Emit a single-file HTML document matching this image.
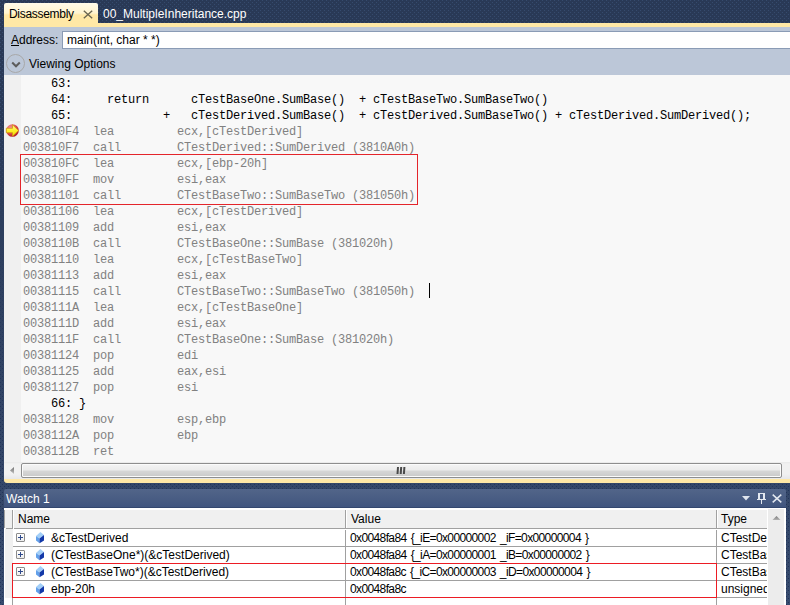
<!DOCTYPE html>
<html><head><meta charset="utf-8">
<style>
*{margin:0;padding:0;box-sizing:border-box}
html,body{width:790px;height:605px;overflow:hidden}
body{position:relative;background-color:#2b3b58;font-family:"Liberation Sans",sans-serif;font-size:12px;color:#000}
.abs{position:absolute}
#bgpat{left:0;top:0;width:790px;height:605px}
/* tabs */
#tab1{left:4px;top:3px;width:94px;height:24px;background:linear-gradient(#fffbe9 0,#fff4cf 10px,#ffe8a6 12px,#ffe8a6 100%);border-radius:2px 2px 0 0}
#tab1 .t{left:5px;top:4px;font-size:12px;color:#000;letter-spacing:-0.3px}
#stripe1{left:4px;top:23px;width:786px;height:4px;background:#ffe8a6}
#tab2t{left:103px;top:7px;color:#fff;font-size:12px}
/* disassembly panel */
#addrbar{left:4px;top:27px;width:786px;height:48px;background:#bcc7d8}
#addrlbl{left:11px;top:33px}
#addrbox{left:62px;top:31px;width:728px;height:18px;background:#fff;border:1px solid #8a9bb5;border-right:none}
#addrbox span{position:absolute;left:4px;top:1px}
#vocirc{left:6px;top:54px;width:19px;height:19px;border:1px solid #a8a8a8;border-radius:50%}
#volbl{left:29px;top:57px}
#margin{left:4px;top:75px;width:17px;height:387px;background:#f0f0f0}
#code{left:21px;top:75px;width:769px;height:387px;background:#f8f8f8}
#lines{left:23px;top:76px;font-family:"Liberation Mono",monospace;font-size:12px;letter-spacing:-0.2px;line-height:16px;white-space:pre;color:#818181}
#lines .s{color:#000}
#hscroll{left:4px;top:462px;width:786px;height:17px;background:linear-gradient(#e9e9e9 0,#f1f1f1 2px,#f1f1f1 12px,#e6e7ea 100%)}
#thumb{left:21px;top:463px;width:761px;height:15px;border:1px solid #8e8e8e;border-radius:2px;box-shadow:inset 0 0 0 1px #fbfbfb;background:linear-gradient(#f4f4f4 0,#ececec 45%,#d6d6d6 55%,#c9c9c9 100%)}
#stripe2{left:4px;top:479px;width:786px;height:4px;background:#ffe8a6;border-radius:0 0 0 3px}
/* watch */
#wtitle{left:4px;top:489px;width:782px;height:19px;background:linear-gradient(#526589 0,#475b82 60%,#40557f 94%,#33476f 94%);border-radius:2px 2px 0 0}
#wtitle .t{left:2px;top:3px;color:#fff}
#grid{left:4px;top:508px;width:782px;height:97px;background:#fff}

#hdr{left:4px;top:509px;width:763px;height:19px;background:#f0f0f0;border-top:1px solid #fff}
.vl{width:1px;background:#a0a0a0}
.vlw{width:1px;background:#fff}
.hl{height:1px;background:#a0a0a0}
#lcol{left:5px;top:529px;width:8px;height:69px;background:#f0f0f0}
.ht{color:#000;margin-top:1px}
.rt{color:#000;white-space:pre}
.exp{left:16px;width:9px;height:9px;border:1px solid #8c8c8c;border-radius:1px;background:linear-gradient(#fff,#eee)}
.exp::before{content:"";position:absolute;left:1px;top:3px;width:5px;height:1px;background:#2f4a8c}
.exp::after{content:"";position:absolute;left:3px;top:1px;width:1px;height:5px;background:#2f4a8c}
.gem{left:36px}
.tclip{left:721px;width:46px;overflow:hidden;white-space:nowrap;color:#000}
#vscroll{left:768px;top:509px;width:16px;height:96px;background:#ececec}
#rb1{left:20px;top:154px;width:398px;height:51px;border:1px solid #e4252b}
#rb2{left:12px;top:563px;width:705px;height:35px;border:1px solid #ec1c24}
</style></head><body>
<svg id="bgpat" class="abs" width="790" height="605"><defs><linearGradient id="bgg" x1="0" y1="0" x2="0" y2="1"><stop offset="0" stop-color="#293956"/><stop offset="0.2" stop-color="#2a3a58"/><stop offset="1" stop-color="#374b6e"/></linearGradient><linearGradient id="mg1" x1="0" y1="0" x2="0" y2="1"><stop offset="0" stop-color="#fff"/><stop offset="0.2" stop-color="#fff"/><stop offset="0.45" stop-color="#000"/></linearGradient><linearGradient id="mg2" x1="0" y1="0" x2="0" y2="1"><stop offset="0.3" stop-color="#000"/><stop offset="0.7" stop-color="#fff"/></linearGradient><mask id="m1"><rect width="790" height="605" fill="url(#mg1)"/></mask><mask id="m2"><rect width="790" height="605" fill="url(#mg2)"/></mask><pattern id="p" width="4" height="4" patternUnits="userSpaceOnUse"><rect x="2" y="0" width="1" height="1" fill="#364b6d"/><rect x="0" y="2" width="1" height="1" fill="#364b6d"/></pattern><pattern id="p2" width="4" height="4" patternUnits="userSpaceOnUse"><rect x="2" y="0" width="1" height="1" fill="#23345a"/><rect x="0" y="2" width="1" height="1" fill="#23345a"/></pattern></defs><rect width="790" height="605" fill="url(#bgg)"/><rect width="790" height="605" fill="url(#p)" mask="url(#m1)"/><rect width="790" height="605" fill="url(#p2)" mask="url(#m2)"/></svg>

<div id="tab1" class="abs"><span class="abs t">Disassembly</span></div>
<div id="stripe1" class="abs"></div>
<svg class="abs" style="left:83px;top:10px" width="10" height="9"><path d="M0.8 0.8 L9.2 8.2 M9.2 0.8 L0.8 8.2" stroke="#6a6550" stroke-width="1.35"/></svg>
<div id="tab2t" class="abs">00_MultipleInheritance.cpp</div>

<div id="addrbar" class="abs"></div>
<div id="addrlbl" class="abs"><u>A</u>ddress:</div>
<div id="addrbox" class="abs"><span>main(int, char * *)</span></div>
<div id="vocirc" class="abs"></div>
<svg class="abs" style="left:11px;top:60.5px" width="10" height="8"><path d="M1.2 1.5 L5 5.3 L8.8 1.5" stroke="#5c5c5c" stroke-width="2" fill="none"/></svg>
<div id="volbl" class="abs">Viewing Options</div>
<div id="margin" class="abs"></div>
<div id="code" class="abs"></div>
<div id="lines" class="abs"><span class="s">    63:  </span>
<span class="s">    64:     return      cTestBaseOne.SumBase()  + cTestBaseTwo.SumBaseTwo()  </span>
<span class="s">    65:             +   cTestDerived.SumBase()  + cTestDerived.SumBaseTwo() + cTestDerived.SumDerived();  </span>
003810F4  lea         ecx,[cTestDerived]
003810F7  call        CTestDerived::SumDerived (3810A0h)
003810FC  lea         ecx,[ebp-20h]
003810FF  mov         esi,eax
00381101  call        CTestBaseTwo::SumBaseTwo (381050h)
00381106  lea         ecx,[cTestDerived]
00381109  add         esi,eax
0038110B  call        CTestBaseOne::SumBase (381020h)
00381110  lea         ecx,[cTestBaseTwo]
00381113  add         esi,eax
00381115  call        CTestBaseTwo::SumBaseTwo (381050h)
0038111A  lea         ecx,[cTestBaseOne]
0038111D  add         esi,eax
0038111F  call        CTestBaseOne::SumBase (381020h)
00381124  pop         edi
00381125  add         eax,esi
00381127  pop         esi
<span class="s">    66: }</span>
00381128  mov         esp,ebp
0038112A  pop         ebp
0038112B  ret</div>
<svg class="abs" style="left:5px;top:123px" width="15" height="15" viewBox="0 0 15 15"><defs><radialGradient id="rg" cx="0.35" cy="0.3" r="0.75"><stop offset="0" stop-color="#f59a9a"/><stop offset="0.6" stop-color="#de4a4a"/><stop offset="1" stop-color="#b01818"/></radialGradient><linearGradient id="yg" x1="0" y1="0" x2="0" y2="1"><stop offset="0" stop-color="#fff9a0"/><stop offset="0.5" stop-color="#fff02a"/><stop offset="1" stop-color="#f5d800"/></linearGradient></defs><circle cx="7.5" cy="7.5" r="6.3" fill="url(#rg)"/><path d="M1.3 5.3 H7.5 V1.8 L13.5 7.5 L7.5 13.2 V9.7 H1.3 Z" fill="url(#yg)" stroke="#cf9a10" stroke-width="0.8"/></svg>
<div id="hscroll" class="abs"></div>
<svg class="abs" style="left:9px;top:466px" width="6" height="9"><defs><linearGradient id="lag" x1="0" y1="0" x2="0" y2="1"><stop offset="0" stop-color="#6f6f6f"/><stop offset="1" stop-color="#c4c4c4"/></linearGradient></defs><path d="M5 1 L1 4.5 L5 8 Z" fill="url(#lag)"/></svg>
<div id="thumb" class="abs"></div>
<div id="stripe2" class="abs"></div>
<svg class="abs" style="left:396px;top:466px" width="10" height="9"><path d="M1 1 H3 L2.5 8 H0.5 Z M4.2 1 H6.2 L5.7 8 H3.7 Z M7.4 1 H9.4 L8.9 8 H6.9 Z" fill="#4a4a4a"/></svg>
<div class="abs" style="left:429px;top:283px;width:1px;height:15px;background:#000"></div>

<div id="wtitle" class="abs"><span class="abs t">Watch 1</span></div>
<div id="grid" class="abs"></div>
<div id="hdr" class="abs"></div>
<div class="abs vl" style="left:12px;top:510px;height:18px"></div>
<div class="abs vlw" style="left:13px;top:510px;height:18px"></div>
<div class="abs vl" style="left:345px;top:510px;height:18px"></div>
<div class="abs vlw" style="left:346px;top:510px;height:18px"></div>
<div class="abs vl" style="left:716px;top:510px;height:18px"></div>
<div class="abs vlw" style="left:717px;top:510px;height:18px"></div>
<div class="abs hl" style="left:6px;top:528px;width:7px"></div><div class="abs hl" style="left:14px;top:528px;width:753px"></div>
<div id="lcol" class="abs"></div>
<div class="abs vl" style="left:12px;top:598px;height:7px"></div><div class="abs vl" style="left:4px;top:510px;height:18px"></div>
<div class="abs vl" style="left:345px;top:530px;height:75px"></div>
<div class="abs vl" style="left:716px;top:530px;height:75px"></div>
<div class="abs hl" style="left:13px;top:546px;width:754px"></div>
<div class="abs hl" style="left:13px;top:563px;width:754px"></div>
<div class="abs hl" style="left:13px;top:580px;width:754px"></div>
<div class="abs hl" style="left:13px;top:597px;width:754px"></div>
<div class="abs ht" style="left:18px;top:511px">Name</div>
<div class="abs ht" style="left:351px;top:511px">Value</div>
<div class="abs ht" style="left:721px;top:511px">Type</div>
<div class="abs exp" style="top:533px"></div>
<div class="abs exp" style="top:550px"></div>
<div class="abs exp" style="top:567px"></div>
<svg class="abs gem" style="top:532px" width="9" height="12" viewBox="0 0 9 12"><path d="M4.4 0 L8 3 L3.5 6.5 L0 4 Z" fill="#a3cff8"/><path d="M0 4 L3.5 6.5 L3.5 11.2 L0 8.5 Z" fill="#62a0ea"/><path d="M8 3 L8 8.5 L3.5 11.2 L3.5 6.5 Z" fill="#1238a8"/></svg>
<svg class="abs gem" style="top:549px" width="9" height="12" viewBox="0 0 9 12"><path d="M4.4 0 L8 3 L3.5 6.5 L0 4 Z" fill="#a3cff8"/><path d="M0 4 L3.5 6.5 L3.5 11.2 L0 8.5 Z" fill="#62a0ea"/><path d="M8 3 L8 8.5 L3.5 11.2 L3.5 6.5 Z" fill="#1238a8"/></svg>
<svg class="abs gem" style="top:566px" width="9" height="12" viewBox="0 0 9 12"><path d="M4.4 0 L8 3 L3.5 6.5 L0 4 Z" fill="#a3cff8"/><path d="M0 4 L3.5 6.5 L3.5 11.2 L0 8.5 Z" fill="#62a0ea"/><path d="M8 3 L8 8.5 L3.5 11.2 L3.5 6.5 Z" fill="#1238a8"/></svg>
<svg class="abs gem" style="top:583px" width="9" height="12" viewBox="0 0 9 12"><path d="M4.4 0 L8 3 L3.5 6.5 L0 4 Z" fill="#a3cff8"/><path d="M0 4 L3.5 6.5 L3.5 11.2 L0 8.5 Z" fill="#62a0ea"/><path d="M8 3 L8 8.5 L3.5 11.2 L3.5 6.5 Z" fill="#1238a8"/></svg>
<div class="abs rt" style="left:51px;top:531px">&amp;cTestDerived</div>
<div class="abs rt" style="left:51px;top:548px">(CTestBaseOne*)(&amp;cTestDerived)</div>
<div class="abs rt" style="left:51px;top:565px">(CTestBaseTwo*)(&amp;cTestDerived)</div>
<div class="abs rt" style="left:51px;top:582px">ebp-20h</div>
<div class="abs rt" style="left:350px;top:531px;letter-spacing:-0.62px;word-spacing:1.4px">0x0048fa84 {_iE=0x00000002 _iF=0x00000004 }</div>
<div class="abs rt" style="left:350px;top:548px;letter-spacing:-0.62px;word-spacing:1.4px">0x0048fa84 {_iA=0x00000001 _iB=0x00000002 }</div>
<div class="abs rt" style="left:350px;top:565px;letter-spacing:-0.62px;word-spacing:1.4px">0x0048fa8c {_iC=0x00000003 _iD=0x00000004 }</div>
<div class="abs rt" style="left:350px;top:582px;letter-spacing:-0.62px;word-spacing:1.4px">0x0048fa8c</div>
<div class="abs tclip" style="top:531px">CTestDerived</div>
<div class="abs tclip" style="top:548px">CTestBaseOne*</div>
<div class="abs tclip" style="top:565px">CTestBaseTwo*</div>
<div class="abs tclip" style="top:582px">unsigned int</div>
<div id="vscroll" class="abs"></div>
<svg class="abs" style="left:772px;top:515px" width="9" height="6"><defs><linearGradient id="ag" x1="0" y1="0" x2="0" y2="1"><stop offset="0" stop-color="#7a7a7a"/><stop offset="1" stop-color="#b4b4b4"/></linearGradient></defs><path d="M0.5 5 L4.5 1 L8.5 5 Z" fill="url(#ag)"/></svg>
<div id="rb1" class="abs"></div>
<div id="rb2" class="abs"></div>
<svg class="abs" style="left:742px;top:496px" width="8" height="5"><path d="M0 0 L8 0 L4 4.5 Z" fill="#dfe5ee"/></svg>
<svg class="abs" style="left:757px;top:493px" width="9" height="12"><path d="M1 0 H8 V6 H9 V7 H5 V11 H4 V7 H0 V6 H1 Z M3 1 V6 H6 V1 Z" fill="#e3e8f0"/></svg>
<svg class="abs" style="left:772px;top:494px" width="10" height="9"><path d="M0.7 0.6 L9.3 8.4 M9.3 0.6 L0.7 8.4" stroke="#e3e8f0" stroke-width="1.5"/></svg>
</body></html>
